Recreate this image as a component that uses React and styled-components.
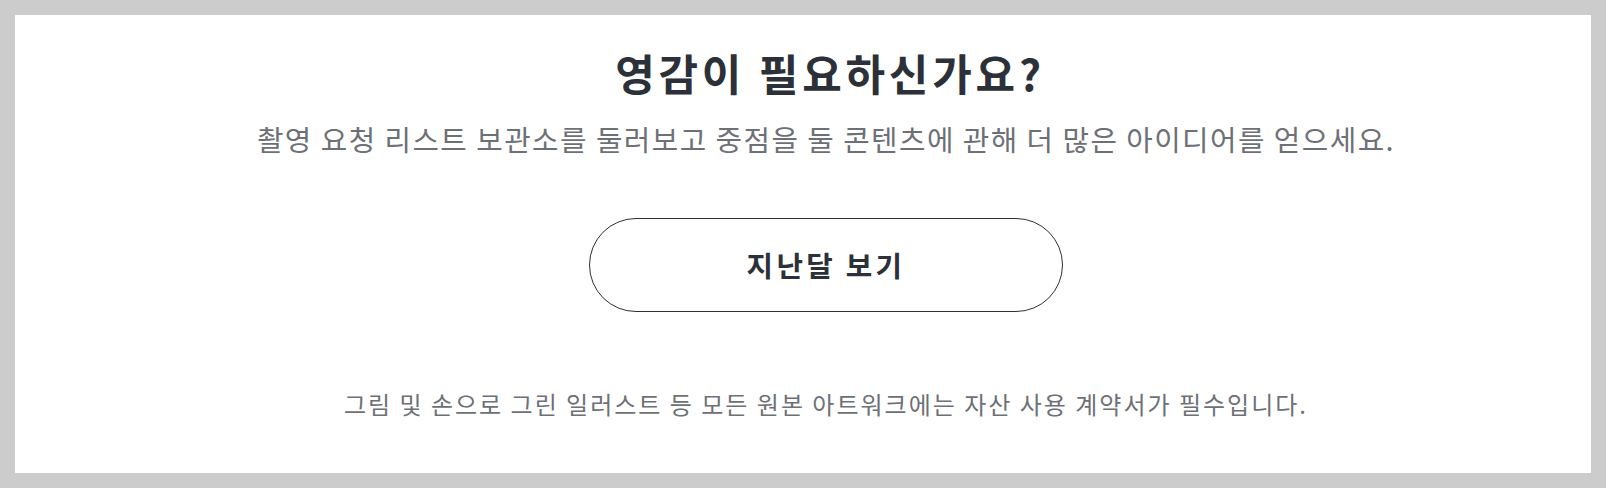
import React from 'react'
import styled, { createGlobalStyle } from 'styled-components'

const GlobalStyle = createGlobalStyle`
  html, body {
    margin: 0;
    padding: 0;
    background: #cccccc;
  }
  body {
    font-family: "Noto Sans CJK KR", "Noto Sans", sans-serif;
  }
`

const Frame = styled.div`
  box-sizing: border-box;
  width: 1606px;
  height: 488px;
  padding: 15px;
  background: #cccccc;
`

const Panel = styled.section`
  box-sizing: border-box;
  height: 100%;
  background: #ffffff;
  padding: 32px 0 0 46px;
  display: flex;
  flex-direction: column;
  align-items: center;
  text-align: center;
`

const Title = styled.h2`
  margin: 0 0 0 8px;
  font-size: 43px;
  line-height: 1.2;
  font-weight: 700;
  letter-spacing: 3.8px;
  color: #2c3038;
`

const Lead = styled.p`
  margin: 23px 0 0;
  font-size: 28.8px;
  line-height: 1.2;
  font-weight: 400;
  letter-spacing: 1.45px;
  color: #6d7076;
`

const OutlineButton = styled.button`
  box-sizing: border-box;
  margin-top: 62px;
  width: 474px;
  height: 94px;
  border: 1.5px solid #2c3038;
  border-radius: 47px;
  background: #ffffff;
  color: #2c3038;
  font-family: inherit;
  font-size: 28.8px;
  font-weight: 700;
  line-height: 1;
  letter-spacing: 3.3px;
  display: flex;
  align-items: center;
  justify-content: center;
  cursor: pointer;
`

const Note = styled.p`
  margin: ${p => p.$gap}px 0 0;
  font-size: 24px;
  line-height: 1.2;
  letter-spacing: 2px;
  color: #6d7076;
`

export default function App() {
  return (
    <>
      <GlobalStyle />
      <Frame>
        <Panel>
          <Title>영감이 필요하신가요?</Title>
          <Lead>촬영 요청 리스트 보관소를 둘러보고 중점을 둘 콘텐츠에 관해 더 많은 아이디어를 얻으세요.</Lead>
          <OutlineButton>지난달 보기</OutlineButton>
          <Note $gap={78}>그림 및 손으로 그린 일러스트 등 모든 원본 아트워크에는 자산 사용 계약서가 필수입니다.</Note>
        </Panel>
      </Frame>
    </>
  )
}
